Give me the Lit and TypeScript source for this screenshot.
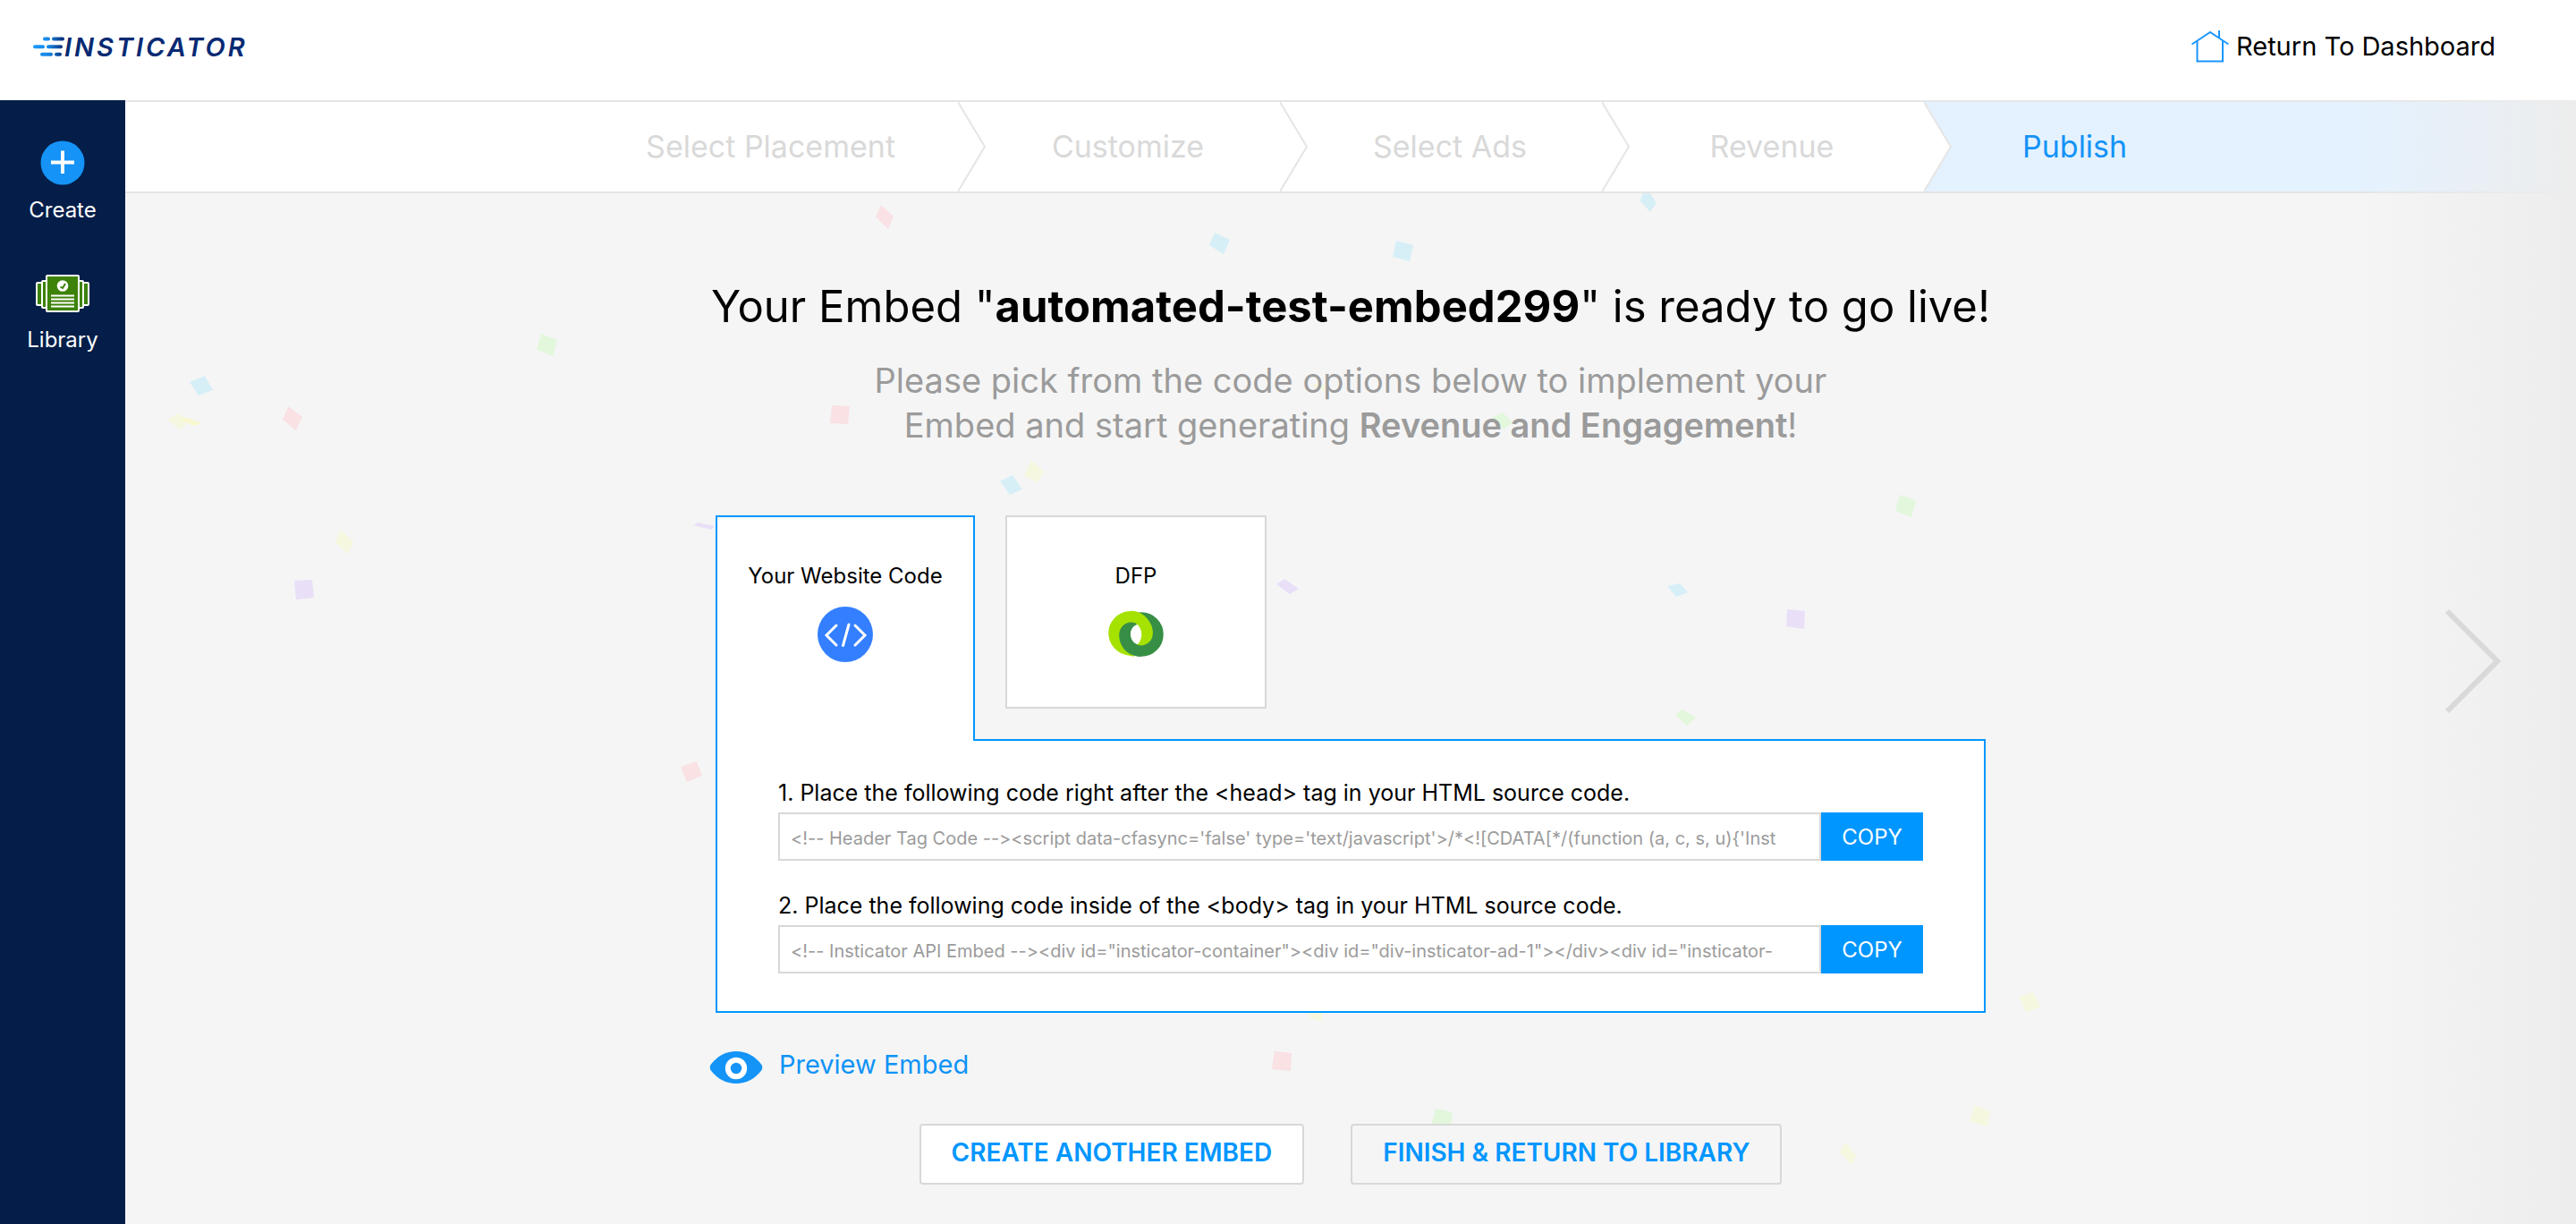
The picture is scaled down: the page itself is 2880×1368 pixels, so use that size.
import { LitElement, html, css, svg } from "lit";
import { customElement, state } from "lit/decorators.js";

const PINK = "#f9e1e4";
const GREEN = "#e2f7dc";
const CYAN = "#d6eff7";
const YELLOW = "#f5f7df";
const PURPLE = "#e9dff7";

/* Scattered confetti pieces: fill and corner points. */
const CONFETTI: [string, string][] = [
  [PINK, "985,229 999,242 993,256 979,242"],
  [GREEN, "605,373 623,380 618,398 600,391"],
  [CYAN, "212,427 229,420 238,436 222,442"],
  [YELLOW, "187,469 199,462 213,470 202,480"],
  ["#f8f7cf", "201,468 210,467 225,473 217,476"],
  [PINK, "322,454 338,466 331,481 316,469"],
  [PINK, "930,453 950,454 948,474 928,473"],
  [CYAN, "1118,538 1132,531 1143,547 1129,553"],
  [PURPLE, "780,584 799,588 795,592 775,587"],
  [YELLOW, "381,592 395,606 389,619 375,606"],
  [PURPLE, "329,649 349,648 351,668 331,670"],
  [YELLOW, "1472,428 1489,433 1480,437 1467,432"],
  [GREEN, "1680,461 1691,472 1681,480 1666,468"],
  [YELLOW, "1153,514 1167,527 1160,539 1145,532"],
  [CYAN, "1358,260 1375,268 1368,284 1352,274"],
  [CYAN, "1561,269 1580,274 1576,292 1557,287"],
  [CYAN, "1837,213 1843,213 1852,227 1845,237 1834,225"],
  [GREEN, "2124,553 2142,559 2137,578 2119,571"],
  [CYAN, "1864,655 1878,652 1887,662 1874,667"],
  [PURPLE, "1998,681 2018,683 2017,703 1997,700"],
  [GREEN, "1873,799 1881,793 1896,802 1886,811"],
  [PINK, "761,857 779,851 785,867 768,874"],
  [PURPLE, "1427,653 1436,647 1452,658 1442,664"],
  [PINK, "1425,1175 1444,1177 1443,1197 1422,1195"],
  [YELLOW, "2257,1114 2273,1109 2281,1126 2265,1131"],
  [YELLOW, "2208,1235 2225,1242 2222,1259 2202,1253"],
  [YELLOW, "2064,1277 2075,1292 2070,1302 2056,1287"],
  [GREEN, "1605,1239 1624,1243 1621,1263 1600,1260"],
  [YELLOW, "1459,1126 1479,1126 1478,1142 1466,1138"],
];

const STEPS = ["Select Placement", "Customize", "Select Ads", "Revenue", "Publish"];

const SNIPPETS = [
  {
    id: "head-code",
    label: "1. Place the following code right after the <head> tag in your HTML source code.",
    code: "<!-- Header Tag Code --><script data-cfasync='false' type='text/javascript'>/*<![CDATA[*/(function (a, c, s, u){'Inst",
  },
  {
    id: "body-code",
    label: "2. Place the following code inside of the <body> tag in your HTML source code.",
    code: '<!-- Insticator API Embed --><div id="insticator-container"><div id="div-insticator-ad-1"></div><div id="insticator-',
  },
];

@customElement("app-root")
export class AppRoot extends LitElement {
  @state() private tab = "website";

  static styles = css`
    :host {
      display: block;
      min-height: 100vh;
      background: #f5f5f5;
      color: #000;
      font-family: Inter, "Liberation Sans", sans-serif;
      font-size: 24px;
      font-feature-settings: "calt" 0;
    }
    * {
      box-sizing: border-box;
    }
    button,
    input {
      font-family: inherit;
      font-feature-settings: inherit;
      margin: 0;
    }
    button {
      cursor: pointer;
    }
    a {
      color: inherit;
      text-decoration: none;
    }
    svg {
      display: block;
      flex: none;
    }
    .page {
      display: flex;
      flex-direction: column;
      min-height: 100vh;
    }
    .header {
      display: flex;
      align-items: center;
      justify-content: space-between;
      height: 112px;
      padding: 0 90px 8px 36px;
      background: #fff;
    }
    .brand {
      display: flex;
      align-items: center;
    }
    .wordmark {
      font-size: 29px;
      font-weight: 600;
      font-style: italic;
      letter-spacing: 3px;
      color: #072a73;
    }
    .home {
      display: flex;
      align-items: center;
      gap: 8px;
      font-size: 29px;
      line-height: 36px;
    }
    .body {
      flex: 1;
      display: flex;
    }
    .sidebar {
      flex: none;
      width: 140px;
      padding-top: 45px;
      display: flex;
      flex-direction: column;
      gap: 45px;
      background: #041e49;
      color: #fff;
    }
    .nav {
      display: flex;
      flex-direction: column;
      align-items: center;
      gap: 12px;
      line-height: 32px;
    }
    .content {
      position: relative;
      flex: 1;
      min-width: 0;
      display: flex;
      flex-direction: column;
    }
    .steps {
      display: grid;
      grid-template-columns: 931fr repeat(3, 360px) 729fr;
      flex: none;
      height: 104px;
      margin: 0;
      padding: 0;
      list-style: none;
      background: #fff;
      border-top: 2px solid #e5e5e5;
      border-bottom: 2px solid #e5e5e5;
      color: #d9d9d9;
      font-size: 34px;
      line-height: 100px;
      z-index: 1;
    }
    .step {
      position: relative;
      padding-left: 20px;
      text-align: center;
      white-space: nowrap;
    }
    .step:first-child {
      padding-right: 70px;
      text-align: right;
    }
    .step:last-child {
      padding-left: 110px;
      text-align: left;
      background: #e4f2ff;
      color: #1393f7;
    }
    .chevron {
      position: absolute;
      top: 0;
      left: 100%;
      z-index: 1;
    }
    .main {
      position: relative;
      flex: 1;
      display: flex;
      flex-direction: column;
      align-items: center;
      padding: 97px 20px 44px;
    }
    .confetti {
      position: absolute;
      inset: 0;
      width: 100%;
      height: 100%;
    }
    .title,
    .lead,
    .codes,
    .actions {
      position: relative;
    }
    .title {
      margin: 0 0 27px;
      font-size: 49px;
      line-height: 60px;
      font-weight: 400;
      text-align: center;
    }
    .title b {
      font-weight: 700;
    }
    .lead {
      margin: 0 0 76px;
      font-size: 38px;
      line-height: 50px;
      color: #9b9b9b;
      text-align: center;
    }
    .lead b {
      font-weight: 600;
    }
    .codes {
      width: 100%;
      max-width: 1420px;
    }
    .tabs {
      display: flex;
      align-items: flex-start;
      gap: 34px;
    }
    .tab {
      display: flex;
      flex-direction: column;
      align-items: center;
      justify-content: flex-start;
      gap: 20px;
      width: 292px;
      height: 216px;
      padding: 52px 0 0;
      border: 2px solid #d8d8d8;
      background: #fff;
      color: #000;
      font-size: 24px;
      line-height: 28px;
    }
    .tab.on {
      position: relative;
      z-index: 1;
      width: 290px;
      height: 252px;
      margin-bottom: -2px;
      border-color: #0096ff;
      border-bottom: 0;
    }
    .panel {
      display: flex;
      flex-direction: column;
      gap: 34px;
      padding: 42px 68px;
      background: #fff;
      border: 2px solid #0096ff;
    }
    .snippet {
      display: grid;
      grid-template-columns: 1fr 114px;
      row-gap: 6px;
    }
    .label {
      grid-column: 1 / -1;
      font-size: 25px;
      line-height: 32px;
    }
    .code {
      min-width: 0;
      height: 54px;
      padding: 4px 12px 0;
      border: 2px solid #d8d8d8;
      border-radius: 0;
      outline: none;
      background: #fff;
      color: #9b9b9b;
      font-size: 20px;
    }
    .copy {
      padding: 0;
      border: 0;
      background: #0096ff;
      color: #fff;
      font-size: 24px;
    }
    .actions {
      display: flex;
      flex-direction: column;
      gap: 44px;
      width: 100%;
      max-width: 1434px;
      margin-top: 40px;
    }
    .preview {
      display: flex;
      align-self: flex-start;
      gap: 18px;
      color: #0f93f6;
      font-size: 29px;
      line-height: 36px;
    }
    .buttons {
      display: flex;
      justify-content: center;
      gap: 52px;
    }
    .button {
      height: 68px;
      padding: 0 34px 4px;
      border: 2px solid #d8d8d8;
      border-radius: 4px;
      background: #f5f5f5;
      color: #0096ff;
      font-size: 28px;
      font-weight: 600;
      white-space: nowrap;
    }
    .button.primary {
      background: #fff;
    }
    .next {
      position: absolute;
      inset: 0 0 0 auto;
      z-index: 2;
      display: flex;
      align-items: center;
      width: 250px;
      padding: 0 0 2px 102px;
      border: 0;
      background: linear-gradient(to right, rgba(237, 237, 237, 0), #ededed);
    }
  `;

  private select(name: string) {
    this.tab = name;
  }

  private copy(code: string) {
    navigator.clipboard?.writeText(code);
  }

  private logoMark() {
    return html`<svg width="36" height="24" viewBox="0 0 36 24" aria-hidden="true">
      <defs>
        <linearGradient id="dash" x1="0" x2="36" y1="0" y2="0" gradientUnits="userSpaceOnUse">
          <stop offset="0" stop-color="#1d9bff" />
          <stop offset="0.5" stop-color="#1688e6" />
          <stop offset="1" stop-color="#072a73" />
        </linearGradient>
      </defs>
      <g stroke="url(#dash)" stroke-width="4" stroke-linecap="round">
        <path d="M14 3.500L18 3.501M24 3.500L34 3.501M3 12.200L12 12.201M18 12.200L32 12.201M11 20.800L21 20.801M27 20.800L31 20.801" />
      </g>
    </svg>`;
  }

  private homeIcon() {
    return html`<svg width="42" height="38" viewBox="0 0 42 38" fill="none" stroke="#1b96ff" stroke-width="2" aria-hidden="true">
      <path d="M.5 16.500L21 3 41.500 16.500M31 1V9.500M6.500 13V35.500H35V13" />
    </svg>`;
  }

  private createIcon() {
    return html`<svg width="50" height="50" viewBox="0 0 50 50" aria-hidden="true">
      <circle cx="25" cy="25" r="24.500" fill="#1593f7" />
      <path d="M12 24.500H38M25 11.500V37" stroke="#fff" stroke-width="4" />
    </svg>`;
  }

  private libraryIcon() {
    return html`<svg width="62" height="56" viewBox="0 -4 62 56" aria-hidden="true">
      <g fill="#3d8209" stroke="#fff" stroke-width="2">
        <rect x="2" y="16" width="7" height="25" rx="1" />
        <rect x="53" y="16" width="7" height="25" rx="1" />
        <rect x="8" y="14" width="7" height="30" rx="1" />
        <rect x="47" y="14" width="7" height="30" rx="1" />
        <rect x="13" y="8" width="36" height="40" rx="1" />
      </g>
      <circle cx="31" cy="19.500" r="6.300" fill="#fff" />
      <path d="M28.500 20.500L31 22 34 17" fill="none" stroke="#3d8209" stroke-width="2" />
      <path d="M18 30.500H44M18 34.500H44M18 38.500H44M18 42.500H44" stroke="#fff" stroke-width="2" />
    </svg>`;
  }

  private codeIcon() {
    return html`<svg width="62" height="62" viewBox="0 0 62 62" fill="none" aria-hidden="true">
      <circle cx="31" cy="31" r="31" fill="#337fff" />
      <path d="M21 21L10 32 21 43M42 21L53 32 42 43M35 20L28.500 43.500" stroke="#fff" stroke-width="3" stroke-linecap="round" />
    </svg>`;
  }

  private dfpIcon() {
    return html`<svg width="62" height="62" viewBox="0 0 62 62" fill="none" aria-hidden="true">
      <circle cx="37" cy="31" r="18.500" stroke="#378f46" stroke-width="12.500" />
      <path d="M28.500 47.800A18.500 18.500 0 1 1 43.500 31" stroke="#a6e200" stroke-width="12.500" />
      <path d="M43.500 30A6.300 6.300 0 0 1 49.700 30C49.700 37 46 42.500 40 43.500L34 43.500C40 42.500 43.500 37 43.500 30Z" fill="#378f46" />
      <path d="M37.300 31C37.300 36 35 41 31 43.500C33 44 36 44 38 43.400C44 42.500 49.700 37.500 49.700 31C49.700 22 44 10 31 6.800L27 12.500L31 18.600C35 21.500 37.300 26 37.300 31Z" fill="#a6e200" />
      <path d="M31 18.600C22 15 12.500 22 12.500 31C12.500 42 19 52.500 30 55.200C24 57 13 50 8 40L10 22L22 12Z" fill="#a6e200" />
      <path d="M31 18.600C21 14.500 12.200 22 12.200 32C12.200 44 21 55.800 37 55.800L41 43.300C31 45 24.700 38 24.700 31C24.700 25 27.500 20.500 31 18.600Z" fill="#378f46" />
    </svg>`;
  }

  private eyeIcon() {
    return html`<svg width="60" height="40" viewBox="0 0 60 40" aria-hidden="true">
      <path d="M1.500 18C9 8 19 3 30 3S51 8 58.500 18C59.500 20 59.500 22 58.500 24C51 34 41 39 30 39S9 34 1.500 24C.5 22 .5 20 1.500 18Z" fill="#1494f7" />
      <circle cx="30" cy="22" r="9.200" fill="none" stroke="#fff" stroke-width="6" />
    </svg>`;
  }

  private chevron(index: number) {
    if (index === STEPS.length - 1) return "";
    return html`<svg class="chevron" width="32" height="100" viewBox="0 0 32 100" fill="#fff" aria-hidden="true">
      <path d="M0 0L30 50 0 100" stroke="#e5e5e5" stroke-width="2" />
    </svg>`;
  }

  render() {
    const { tab } = this;
    return html`<div class="page">
      <header class="header">
        <a class="brand" href="#home">${this.logoMark()}<span class="wordmark">INSTICATOR</span></a>
        <a class="home" href="#dashboard">${this.homeIcon()}Return To Dashboard</a>
      </header>
      <div class="body">
        <nav class="sidebar">
          <a class="nav" href="#create">${this.createIcon()}Create</a>
          <a class="nav" href="#library">${this.libraryIcon()}Library</a>
        </nav>
        <div class="content">
          <ol class="steps">
            ${STEPS.map((name, i) => html`<li class="step">${name}${this.chevron(i)}</li>`)}
          </ol>
          <main class="main">
            <svg class="confetti" viewBox="140 216 2740 1152" preserveAspectRatio="xMidYMin slice" aria-hidden="true">
              ${CONFETTI.map(([fill, points]) => svg`<polygon fill=${fill} points=${points} />`)}
            </svg>
            <h1 class="title">Your Embed "<b>automated-test-embed299</b>" is ready to go live!</h1>
            <p class="lead">
              Please pick from the code options below to implement your<br />Embed and start generating
              <b>Revenue and Engagement</b>!
            </p>
            <section class="codes">
              <div class="tabs" role="tablist">
                <button class="tab ${tab === "website" ? "on" : ""}" role="tab" @click=${() => this.select("website")}>
                  Your Website Code${this.codeIcon()}
                </button>
                <button class="tab ${tab === "dfp" ? "on" : ""}" role="tab" @click=${() => this.select("dfp")}>
                  DFP${this.dfpIcon()}
                </button>
              </div>
              <div class="panel" role="tabpanel">
                ${SNIPPETS.map(
                  (s) => html`<div class="snippet">
                    <label class="label" for=${s.id}>${s.label}</label>
                    <input class="code" id=${s.id} type="text" readonly .value=${s.code} />
                    <button class="copy" @click=${() => this.copy(s.code)}>COPY</button>
                  </div>`
                )}
              </div>
            </section>
            <div class="actions">
              <a class="preview" href="#preview">${this.eyeIcon()}Preview Embed</a>
              <div class="buttons">
                <button class="button primary">CREATE ANOTHER EMBED</button>
                <button class="button">FINISH &amp; RETURN TO LIBRARY</button>
              </div>
            </div>
          </main>
          <button class="next" aria-label="Next">
            <svg width="64" height="120" viewBox="0 0 64 120" fill="none" aria-hidden="true">
              <path d="M4 4L60 60 4 116" stroke="#d9d9d9" stroke-width="6" />
            </svg>
          </button>
        </div>
      </div>
    </div>`;
  }
}
